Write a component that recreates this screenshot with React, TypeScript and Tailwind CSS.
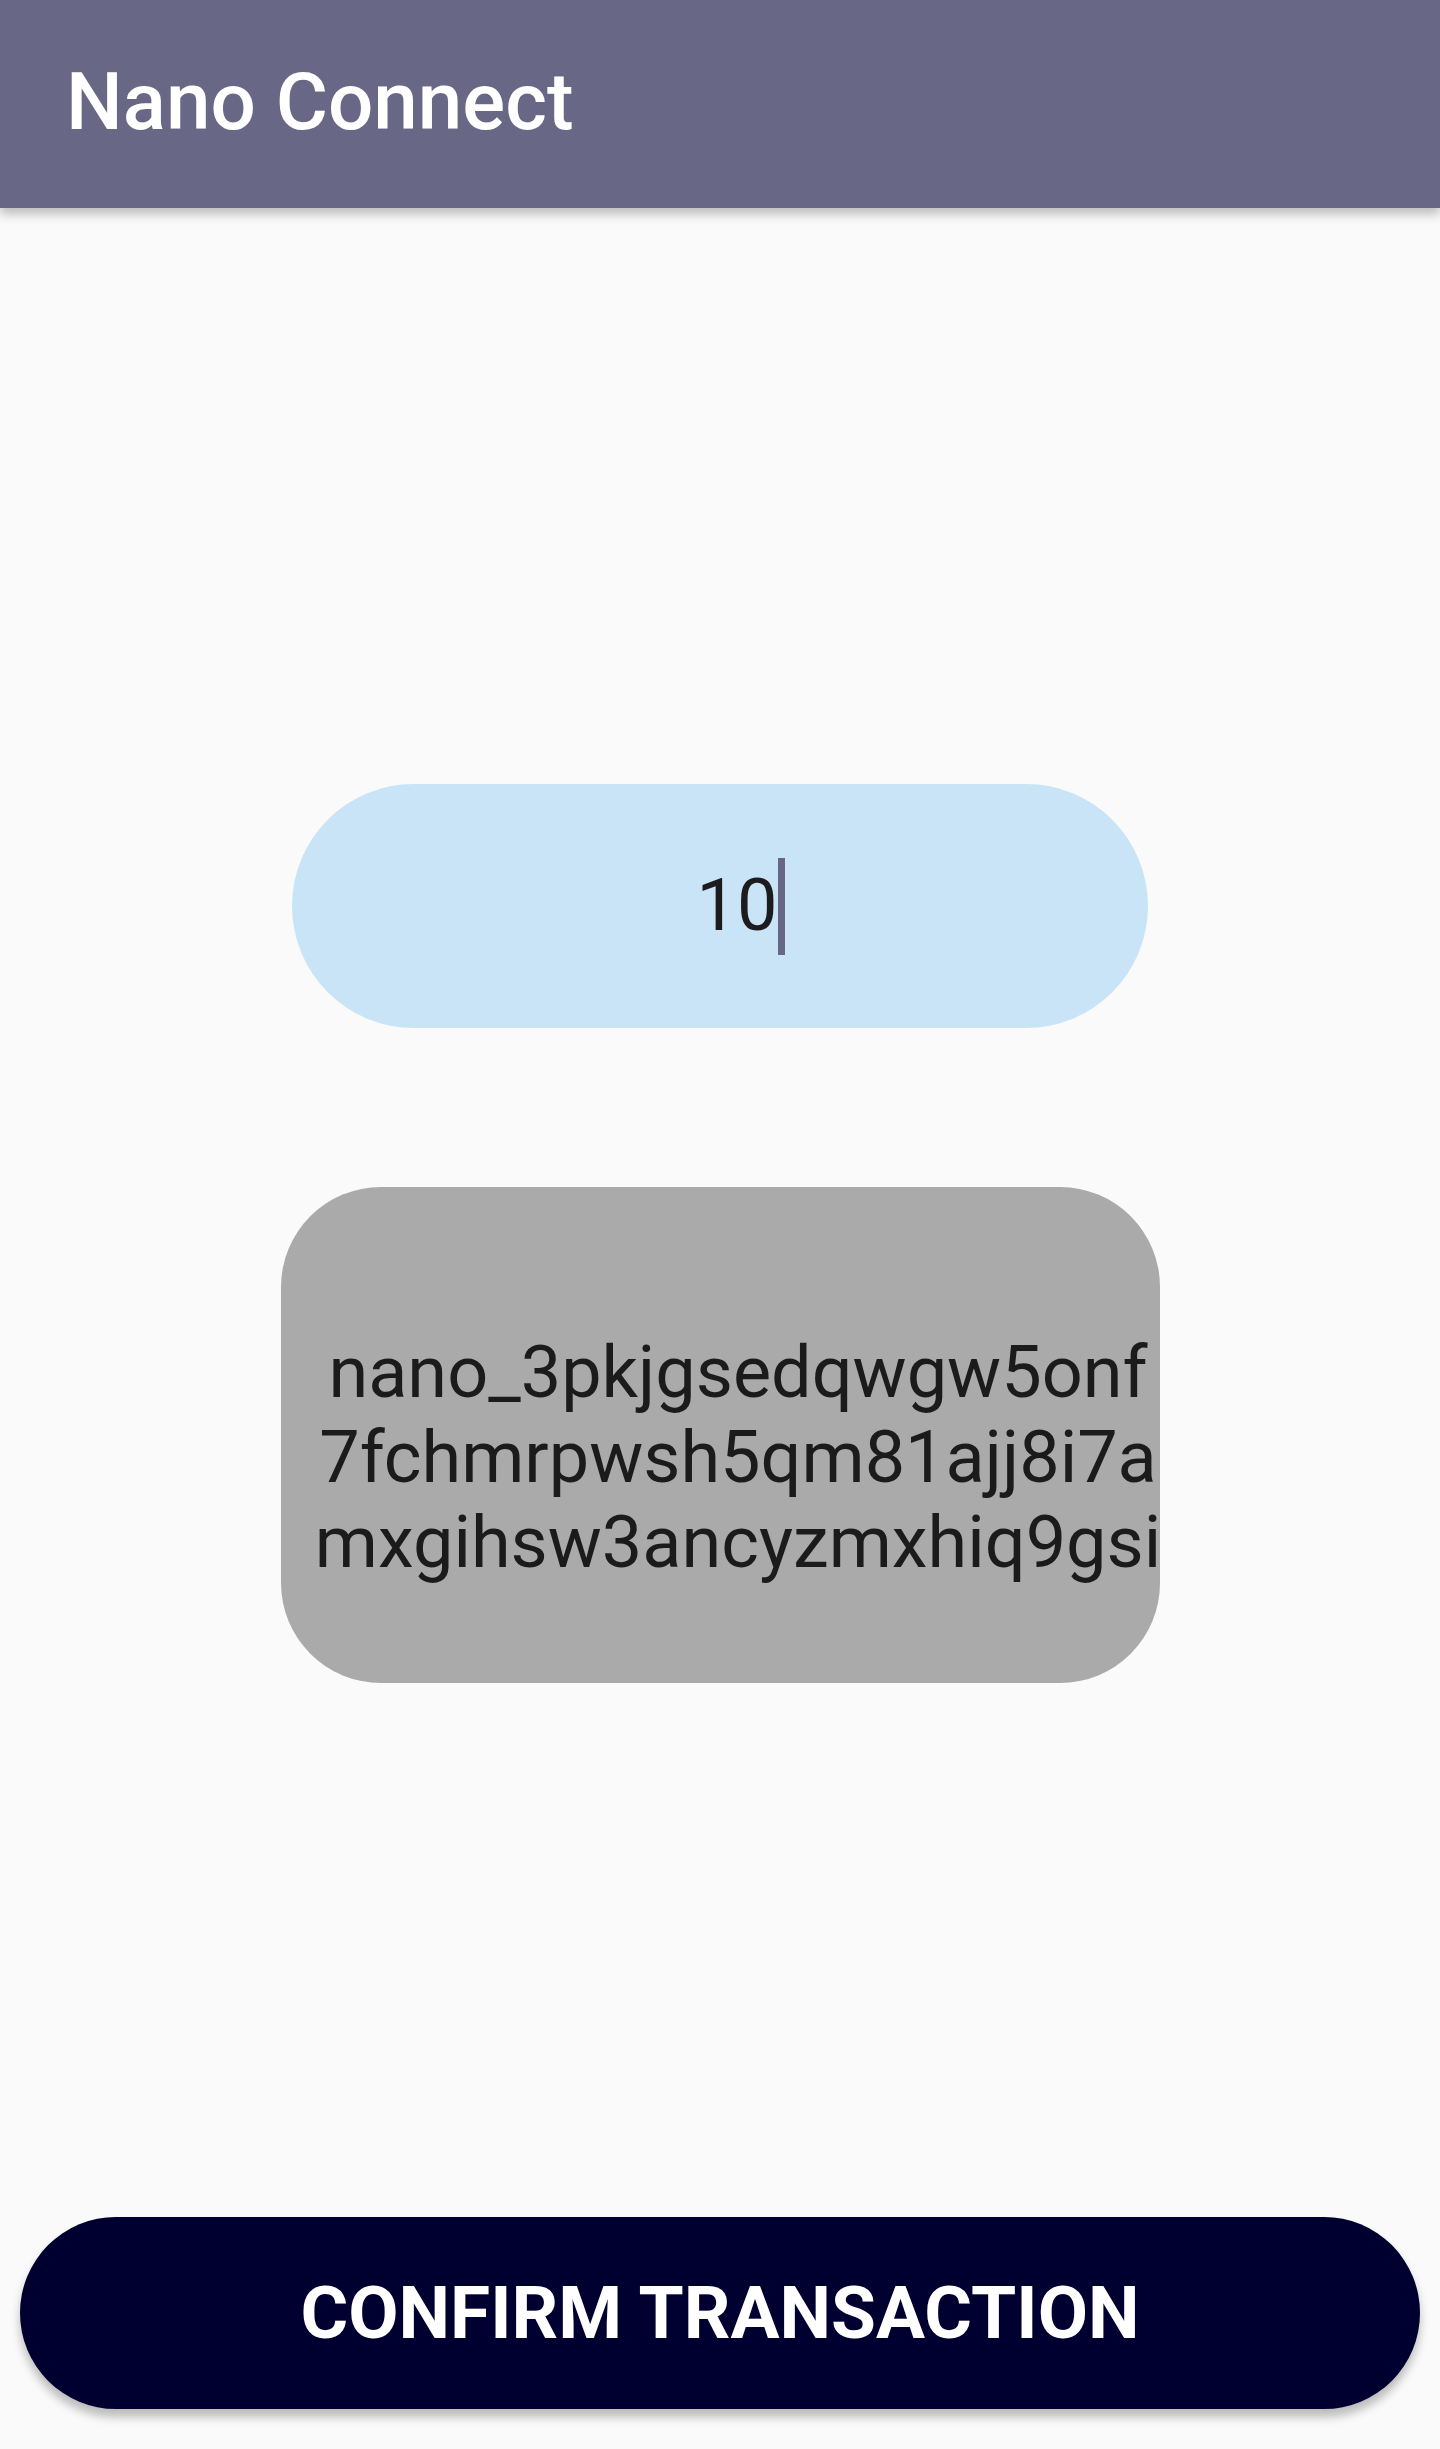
import React from "react";

export default function App() {
  return (
    <div className="min-h-[2449px] w-[1440px] bg-[#fafafa] flex flex-col" style={{ fontFamily: "Roboto, 'Liberation Sans', sans-serif" }}>
      <header className="h-[208px] bg-[#686886] flex items-center pl-[66px] shadow-[0_6px_10px_rgba(0,0,0,0.25)] relative z-10">
        <h1 className="text-white text-[80px] font-medium leading-none tracking-[0px] pb-[4px]">Nano Connect</h1>
      </header>
      <main className="flex-1 flex flex-col items-center">
        <div className="mt-[576px] w-[856px] h-[244px] rounded-full bg-[#c9e3f7] flex items-center justify-center pl-[42px]">
          <span className="text-[72px] text-[#1c1c1e] leading-none flex items-center">
            10
            <span className="inline-block w-[7px] h-[97px] bg-[#676687] ml-[1px]" />
          </span>
        </div>
        <div className="mt-[159px] w-[879px] h-[496px] rounded-[100px] bg-[#aaaaaa] flex flex-col items-center justify-center text-[72px] leading-[85px] text-[#1b1b1b] pl-[36px] pt-[44px] whitespace-nowrap">
          <span>nano_3pkjgsedqwgw5onf</span>
          <span>7fchmrpwsh5qm81ajj8i7a</span>
          <span>mxgihsw3ancyzmxhiq9gsi</span>
        </div>
        <div className="flex-1" />
        <button className="mb-[40px] w-[1400px] h-[192px] rounded-full bg-[#000030] text-white text-[73px] font-bold leading-none shadow-[0_8px_10px_rgba(0,0,0,0.25)]">
          CONFIRM TRANSACTION
        </button>
      </main>
    </div>
  );
}
